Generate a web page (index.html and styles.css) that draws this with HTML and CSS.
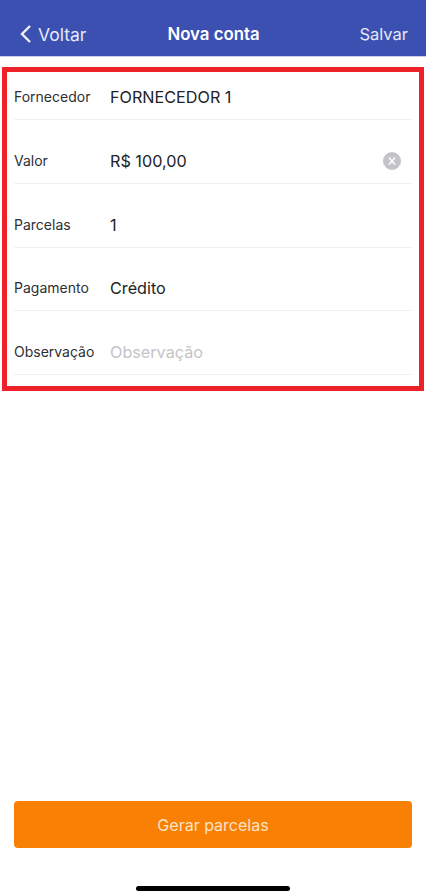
FILE: index.html
```html
<!DOCTYPE html>
<html lang="pt-BR">
<head>
  <meta charset="UTF-8">
  <title>Nova conta</title>
  <link rel="stylesheet" href="styles.css">
</head>
<body>

  <header class="topbar">
    <div class="back">
      <svg class="back-icon" width="13" height="20" viewBox="0 0 13 20">
        <path d="M11 2 L3 10 L11 18" fill="none" stroke="#eef0fa" stroke-width="2.4" />
      </svg>
      <span>Voltar</span>
    </div>
    <div class="title">Nova conta</div>
    <div class="save">Salvar</div>
  </header>

  <main class="content">
    <form class="form">
      <div class="row">
        <span class="label">Fornecedor</span>
        <span class="value">FORNECEDOR 1</span>
      </div>
      <div class="row">
        <span class="label">Valor</span>
        <span class="value">R$ 100,00</span>
        <span class="clear">
          <svg width="10" height="10" viewBox="0 0 10 10">
            <path d="M2 1.5 L8 8.5 M8 1.5 L2 8.5" stroke="#fff" stroke-width="1.5" />
          </svg>
        </span>
      </div>
      <div class="row">
        <span class="label">Parcelas</span>
        <span class="value">1</span>
      </div>
      <div class="row">
        <span class="label">Pagamento</span>
        <span class="value">Crédito</span>
      </div>
      <div class="row">
        <span class="label">Observação</span>
        <span class="value placeholder">Observação</span>
      </div>
    </form>
  </main>

  <footer class="footer">
    <button type="button" class="generate">Gerar parcelas</button>
    <div class="home-bar"></div>
  </footer>

</body>
</html>
```

FILE: styles.css
```css
* {
  box-sizing: border-box;
}

html, body {
  margin: 0;
  height: 100%;
}

body {
  display: flex;
  flex-direction: column;
  height: 896px;
  overflow: hidden;
  background-color: #ffffff;
  color: #222326;
  font-family: Inter, "Liberation Sans", sans-serif;
}

/* Top bar */
.topbar {
  display: flex;
  align-items: center;
  justify-content: space-between;
  height: 57px;
  padding: 12px 18px 0 19px;
  background-color: #3c50b1;
  border-bottom: 1px solid #c9cfea;
  color: #e6e9f7;
  font-size: 16.5px;
}

.back {
  display: flex;
  align-items: center;
  gap: 6px;
  width: 90px;
  font-size: 17.5px;
}

.back-icon {
  display: block;
}

.title {
  color: #ffffff;
  font-size: 16.8px;
  font-weight: 600;
}

.save {
  width: 90px;
  text-align: right;
}

/* Form */
.content {
  flex: 1;
  padding: 10px 2px 0;
}

.form {
  display: flex;
  flex-direction: column;
  gap: 15.75px;
  padding: 0 7px 11px;
  border: 5px solid #ed2127;
}

.row {
  display: flex;
  align-items: center;
  height: 48px;
  padding-top: 3px;
  border-bottom: 1px solid #eff0f7;
}

.label {
  width: 96px;
  flex-shrink: 0;
  padding-bottom: 1px;
  font-size: 14px;
  color: #2e2f33;
}

.value {
  flex: 1;
  font-size: 16.2px;
}

.placeholder {
  color: #c4c4c8;
}

.clear {
  display: flex;
  align-items: center;
  justify-content: center;
  width: 18px;
  height: 18px;
  margin-right: 11px;
  border-radius: 50%;
  background-color: #c3c3c9;
}

/* Bottom */
.footer {
  display: flex;
  flex-direction: column;
  align-items: center;
  padding: 0 14px 5px;
}

.generate {
  width: 100%;
  height: 47px;
  border: 0;
  border-radius: 4px;
  background-color: #f78005;
  color: #fde3c5;
  font-family: inherit;
  font-size: 16px;
}

.home-bar {
  width: 154px;
  height: 5px;
  margin-top: 38px;
  border-radius: 3px;
  background-color: #000000;
}
```
